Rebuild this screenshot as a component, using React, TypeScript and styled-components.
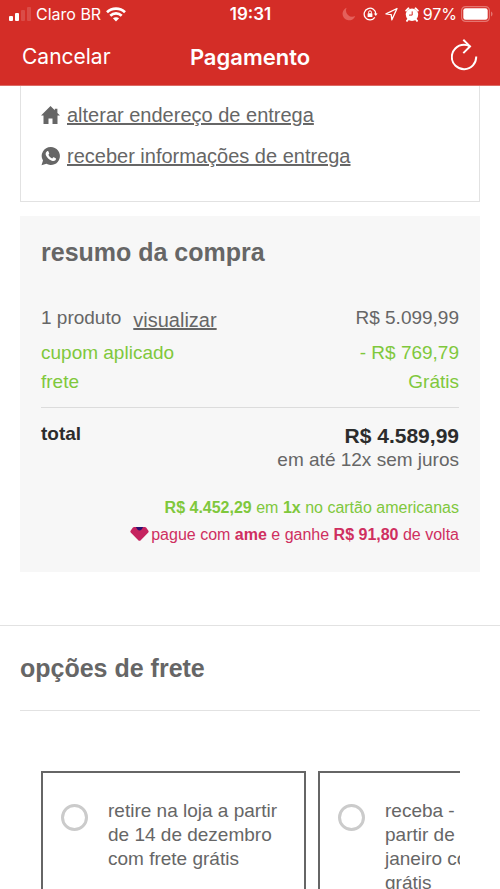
import React from "react";
import styled, { createGlobalStyle } from "styled-components";

const GlobalStyle = createGlobalStyle`
  * { box-sizing: border-box; }
  body {
    margin: 0;
    background: #fff;
    color: #666;
    font-family: "Liberation Sans", Arial, sans-serif;
  }
  h1, h2, p { margin: 0; }
`;

const Screen = styled.div`
  display: flex;
  flex-direction: column;
  height: 100vh;
`;

const Header = styled.header`
  flex: none;
  background: #d42d27;
  border-bottom: 1px solid #dc6a64;
  color: #fff;
  font-family: Inter, Roboto, sans-serif;
`;

const StatusBar = styled.div`
  display: grid;
  grid-template-columns: 1fr auto 1fr;
  align-items: center;
  height: 28px;
  padding: 0 7px 0 8px;
  font-size: 16px;
  line-height: 28px;
`;

const StatusGroup = styled.div<{ $end?: boolean; $gap: number }>`
  display: flex;
  align-items: center;
  gap: ${(p) => p.$gap}px;
  justify-content: ${(p) => (p.$end ? "flex-end" : "flex-start")};
  svg { flex: none; display: block; }
`;

const Clock = styled.time`
  font-size: 17px;
  font-weight: 600;
`;

const NavBar = styled.nav`
  display: grid;
  grid-template-columns: 1fr auto 1fr;
  align-items: center;
  height: 57px;
  padding: 0 22px;
`;

const NavButton = styled.button<{ $end?: boolean }>`
  justify-self: ${(p) => (p.$end ? "end" : "start")};
  padding: 0;
  border: 0;
  background: none;
  color: inherit;
  font: inherit;
  font-size: 21px;
  line-height: 28px;
  svg { display: block; }
`;

const NavTitle = styled.h1`
  font-size: 22px;
  line-height: 28px;
  font-weight: 600;
`;

const Content = styled.main`
  flex: 1;
  min-height: 0;
  overflow-x: hidden;
  overflow-y: auto;
  scrollbar-width: none;
`;

const AddressCard = styled.section`
  display: flex;
  flex-direction: column;
  gap: 17px;
  margin: 0 20px;
  padding: 17px 20px 33px;
  border: 1px solid #e2e2e2;
  border-top: 0;
`;

const ActionLink = styled.a`
  display: flex;
  align-items: center;
  gap: 7px;
  color: #666;
  font-size: 20px;
  line-height: 24px;
  text-decoration: none;
  span { text-decoration: underline; }
  svg { flex: none; }
`;

const Summary = styled.section`
  margin: 14px 20px 0;
  padding: 20px 21px 25px;
  background: #f7f7f7;
`;

const Heading = styled.h2`
  font-size: 25px;
  line-height: 32px;
  font-weight: 700;
`;

const Lines = styled.div`
  display: flex;
  flex-direction: column;
  gap: 5px;
  margin-top: 38px;
  padding-bottom: 13px;
  border-bottom: 1px solid #dcdcdc;
`;

const Line = styled.div<{ $green?: boolean }>`
  display: flex;
  align-items: baseline;
  justify-content: space-between;
  color: ${(p) => (p.$green ? "#7fc83c" : "#666")};
  font-size: 19px;
  line-height: 24px;
`;

const ProductLine = styled(Line)`
  align-items: flex-start;
  padding-bottom: 4px;
`;

const Product = styled.span`
  display: flex;
  gap: 12px;
`;

const ViewLink = styled.a`
  padding-top: 2px;
  color: #666;
  font-size: 20px;
`;

const Totals = styled.div`
  display: flex;
  justify-content: space-between;
  padding-top: 14px;
  color: #2c2c2c;
  font-size: 19px;
  line-height: 24px;
`;

const Amount = styled.div`
  text-align: right;
  color: #666;
`;

const AmountValue = styled.strong`
  display: block;
  padding-top: 2px;
  color: #2c2c2c;
  font-size: 21px;
`;

const Promos = styled.div`
  display: flex;
  flex-direction: column;
  align-items: flex-end;
  gap: 3px;
  margin-top: 24px;
`;

const Promo = styled.p<{ $color: string }>`
  display: flex;
  align-items: center;
  gap: 2px;
  color: ${(p) => p.$color};
  font-size: 16px;
  line-height: 24px;
`;

const Shipping = styled.section`
  margin-top: 53px;
  padding: 26px 20px 0;
  border-top: 1px solid #e2e2e2;
`;

const ShippingTop = styled.div`
  padding-bottom: 26px;
  border-bottom: 1px solid #e2e2e2;
`;

const Options = styled.div`
  display: flex;
  gap: 12px;
  margin: 60px 20px 0 21px;
  overflow-x: auto;
  scrollbar-width: none;
`;

const Option = styled.label`
  flex: none;
  display: flex;
  gap: 20px;
  width: 265px;
  min-height: 160px;
  padding: 26px 18px;
  border: 2px solid #666;
  font-size: 19px;
  line-height: 24px;
  white-space: pre-line;
`;

const Radio = styled.input`
  flex: none;
  appearance: none;
  width: 27px;
  height: 27px;
  margin: 5px 0 0;
  border: 3px solid #cbcbcb;
  border-radius: 50%;
  background: #fff;
  &:checked { border: 8px solid #d42d27; }
`;

const SignalIcon = () => (
  <svg width="23" height="14" viewBox="0 0 23 14" fill="#fff" aria-hidden="true">
    <rect x="1" y="9" width="4" height="5" rx="1" />
    <rect x="7" y="6" width="4" height="8" rx="1" />
    <rect x="13" y="3" width="4" height="11" rx="1" opacity=".15" />
    <rect x="19" y="0" width="4" height="14" rx="1" opacity=".15" />
  </svg>
);

const WifiIcon = () => (
  <svg width="20" height="15" viewBox="0 0 20 15" fill="none" stroke="#fff" strokeWidth="2.7" aria-hidden="true">
    <path d="M1 5.2C6 .4 14 .4 19 5.2M4.3 8.7c3.2-3 8.2-3 11.4 0" />
    <path d="M10 14.5 6.9 11.3c1.8-1.5 4.4-1.5 6.2 0Z" fill="#fff" stroke="none" />
  </svg>
);

const MoonIcon = () => (
  <svg width="14" height="14" viewBox="0 0 14 14" fill="#e4605b" aria-hidden="true">
    <path d="M4.6.8A6.5 6.5 0 1 0 13.2 9 6.3 6.3 0 0 1 4.6.8Z" />
  </svg>
);

const LockIcon = () => (
  <svg width="15" height="14" viewBox="0 0 15 14" fill="none" stroke="#fff" strokeWidth="1.3" aria-hidden="true">
    <path d="M11.8 10.3A5.8 5.8 0 1 1 12.8 7" />
    <path d="m10.8 6.4 2 2.7 1.800-2.700Z" fill="#fff" stroke="none" />
    <rect x="4.6" y="6.2" width="4.8" height="3.8" rx=".6" fill="#fff" stroke="none" />
    <path d="M5.600 6.500V5.200a1.400 1.400 0 0 1 2.800 0v1.300" strokeWidth="1" />
  </svg>
);

const LocationIcon = () => (
  <svg width="13" height="14" viewBox="0 0 13 14" fill="none" stroke="#fff" strokeWidth="1.3" strokeLinejoin="round" aria-hidden="true">
    <path d="M12 1.500 1 6.900l5.200.7.7 5.200Z" />
  </svg>
);

const AlarmIcon = () => (
  <svg width="14" height="15" viewBox="0 0 14 15" aria-hidden="true">
    <circle cx="7" cy="7.8" r="6.200" fill="#fff" />
    <path d="M1.200 3.600 3.400 1.400M12.800 3.600 10.600 1.400M3 12.500l-1 1.300M11 12.500l1 1.300" stroke="#fff" strokeWidth="2" strokeLinecap="round" />
    <path d="M7.200 4.400v3.700H4" stroke="#d42d27" strokeWidth="1" fill="none" />
  </svg>
);

const BatteryIcon = () => (
  <svg width="32" height="16" viewBox="0 0 32 16" aria-hidden="true">
    <rect x=".6" y=".6" width="27.8" height="14.8" rx="4" fill="none" stroke="#e57570" strokeWidth="1.2" />
    <rect x="2.3" y="2.3" width="24.4" height="11.4" rx="2.3" fill="#fff" />
    <path d="M30 5.500c2 .8 2 4.200 0 5Z" fill="#e57570" />
  </svg>
);

const ReloadIcon = () => (
  <svg width="27" height="36" viewBox="0 0 27 36" fill="none" stroke="#fff" strokeWidth="2" aria-hidden="true">
    <path d="M25.200 17.500A12.200 12.200 0 1 1 13 5.800q3.200 0 6 1.600" />
    <path d="m12.300.8 6.700 6.600-6.700 6.700" />
  </svg>
);

const HomeIcon = () => (
  <svg width="19" height="20" viewBox="0 0 19 20" fill="#666" aria-hidden="true">
    <path d="M9.500 1 0 10.600h2.500V19h5v-5.400h4V19h5v-8.400H19l-2.600-2.700V3.700h-2.600v1.600Z" />
  </svg>
);

const WhatsappIcon = () => (
  <svg width="19" height="20" viewBox="0 0 19 20" aria-hidden="true">
    <path d="M9.800 1A9 9 0 0 0 2 14.600L.5 19.300l4.900-1.500A9 9 0 1 0 9.800 1Z" fill="#666" />
    <path d="M6.100 5.200c.5-.4 1.100-.3 1.300.2l.8 1.800c.1.400 0 .7-.8 1.600.8 1.700 2 2.800 3.800 3.600.9-1.100 1.100-1.400 1.600-1.200l1.900 1c.5.300.3 1.500-.3 2-.8.8-2.200 1-3.600.5-2.800-.9-5-3-6-5.600-.5-1.500.2-3.300 1.300-3.900Z" fill="#fff" />
  </svg>
);

const GemIcon = () => (
  <svg width="19" height="16" viewBox="0 0 19 16" aria-hidden="true">
    <path d="M4.200 0h10.600c.6 0 1 .2 1.300.6l2.300 3.200c.4.600.4 1.100-.1 1.600l-7.800 8c-.6.600-1.400.600-2 0L.7 5.400c-.5-.5-.5-1-.1-1.600L2.900.6c.3-.4.700-.6 1.300-.6Z" fill="#c5235f" />
    <path d="M5.800 0h7.400l-1.600 2.600c-1.200 1.300-3 1.300-4.200 0Z" fill="#2a1170" />
  </svg>
);

export default function App() {
  return (
    <Screen>
      <GlobalStyle />
      <Header>
        <StatusBar>
          <StatusGroup $gap={5}>
            <SignalIcon />
            <span>Claro BR</span>
            <WifiIcon />
          </StatusGroup>
          <Clock>19:31</Clock>
          <StatusGroup $end $gap={4}>
            <StatusGroup $gap={7}>
              <MoonIcon />
              <LockIcon />
              <LocationIcon />
              <AlarmIcon />
            </StatusGroup>
            <span>97%</span>
            <BatteryIcon />
          </StatusGroup>
        </StatusBar>
        <NavBar>
          <NavButton type="button">Cancelar</NavButton>
          <NavTitle>Pagamento</NavTitle>
          <NavButton type="button" $end aria-label="Recarregar">
            <ReloadIcon />
          </NavButton>
        </NavBar>
      </Header>
      <Content>
        <AddressCard>
          <ActionLink href="#endereco">
            <HomeIcon />
            <span>alterar endereço de entrega</span>
          </ActionLink>
          <ActionLink href="#informacoes">
            <WhatsappIcon />
            <span>receber informações de entrega</span>
          </ActionLink>
        </AddressCard>
        <Summary>
          <Heading>resumo da compra</Heading>
          <Lines>
            <ProductLine>
              <Product>
                1 produto
                <ViewLink href="#produtos">visualizar</ViewLink>
              </Product>
              <span>R$ 5.099,99</span>
            </ProductLine>
            <Line $green>
              <span>cupom aplicado</span>
              <span>- R$ 769,79</span>
            </Line>
            <Line $green>
              <span>frete</span>
              <span>Grátis</span>
            </Line>
          </Lines>
          <Totals>
            <strong>total</strong>
            <Amount>
              <AmountValue>R$ 4.589,99</AmountValue>
              em até 12x sem juros
            </Amount>
          </Totals>
          <Promos>
            <Promo $color="#7fc83c">
              <span>
                <b>R$ 4.452,29</b> em <b>1x</b> no cartão americanas
              </span>
            </Promo>
            <Promo $color="#cf2f60">
              <GemIcon />
              <span>
                pague com <b>ame</b> e ganhe <b>R$ 91,80</b> de volta
              </span>
            </Promo>
          </Promos>
        </Summary>
        <Shipping>
          <ShippingTop>
            <Heading>opções de frete</Heading>
          </ShippingTop>
          <Options>
            <Option>
              <Radio type="radio" name="frete" value="loja" />
              <span>{"retire na loja a partir\nde 14 de dezembro\ncom frete grátis"}</span>
            </Option>
            <Option>
              <Radio type="radio" name="frete" value="casa" />
              <span>{"receba - a\npartir de 09 de\njaneiro com frete\ngrátis"}</span>
            </Option>
          </Options>
        </Shipping>
      </Content>
    </Screen>
  );
}
